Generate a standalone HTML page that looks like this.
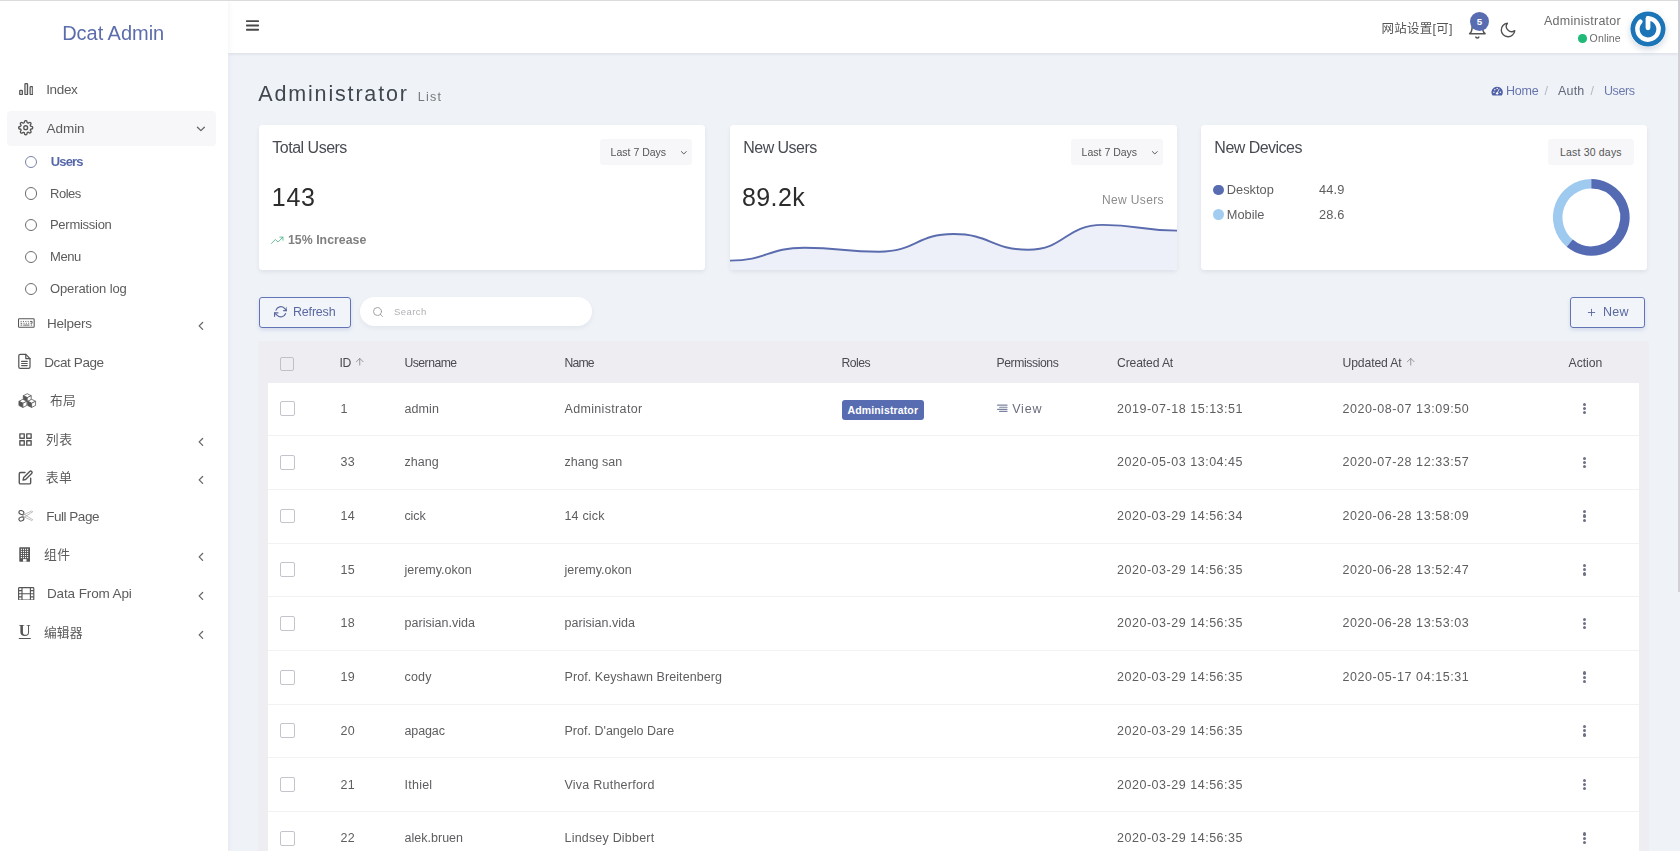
<!DOCTYPE html>
<html lang="en">
<head>
<meta charset="utf-8">
<title>Dcat Admin</title>
<style>
*{box-sizing:border-box;margin:0;padding:0}
html,body{width:1680px;height:851px;overflow:hidden}
body{will-change:opacity;background:#eff3f8;font-family:"Liberation Sans","Noto Sans CJK SC",sans-serif;color:#626262;position:relative;font-size:13px}
a{color:inherit;text-decoration:none}
ul{list-style:none}
svg{display:block;flex:none}
.topline{position:absolute;left:0;top:0;width:1680px;height:1px;background:#dbdbdc;z-index:50}
.scroll-thumb{position:absolute;left:1678px;top:0;width:2px;height:591.5px;background:#d0d0d6;z-index:60}
/* sidebar */
.sidebar{position:absolute;left:0;top:1px;width:228px;height:850px;background:#fff;box-shadow:1px 0 5px rgba(30,40,80,.05);z-index:10}
.brand{position:absolute;left:0;top:0;width:228px;height:64px;line-height:64px;text-align:center;color:#5c6dac;font-size:20px}
.mi{position:absolute;left:6.5px;width:209px;height:35px;border-radius:4px;color:#5c5c5c;font-size:13.5px;line-height:35px;white-space:nowrap;display:block}
.mi.open{background:#f7f7f9}
.mi .ico{position:absolute;top:0;height:35px;display:flex;align-items:center;color:#555}
.mi .txt{position:absolute;top:0}
.mi .arr{position:absolute;color:#686868}
.si{position:absolute;left:6.5px;width:209px;height:30px;line-height:30px;color:#5c5c5c;font-size:13px;white-space:nowrap;display:block}
.si .dot{position:absolute;left:18.6px;top:8.8px;width:12.4px;height:12.4px;border:1.3px solid #6c6c6c;border-radius:50%}
.si .txt{position:absolute;left:44px;top:0}
.si.active .txt{color:#5667a8;font-weight:bold}
.si.active .dot{border-color:#7a84a6}
/* header */
.navbar{position:absolute;left:228px;top:1px;width:1450px;height:52.2px;background:#fff;box-shadow:0 1px 3px rgba(60,60,85,.12);z-index:5}
.navbar .burger{position:absolute;left:18.3px;top:19px;color:#4a4a4a}
.navbar .site{position:absolute;left:1153.5px;top:15.5px;height:25px;line-height:25px;font-size:12.5px;color:#555;white-space:nowrap}
.navbar .bell{position:absolute;left:1238.9px;top:18.2px;color:#555}
.navbar .badge5{position:absolute;left:1242px;top:11px;width:19px;height:19px;border-radius:50%;background:#586cb1;color:#fff;font-size:9.8px;font-weight:bold;line-height:19.6px;text-align:center}
.navbar .moon{position:absolute;left:1271px;top:19.8px;color:#505050}
.navbar .uname{position:absolute;top:12.3px;font-size:12.5px;line-height:16px;color:#6b6b6b;white-space:nowrap}
.navbar .ustat{position:absolute;top:29.5px;font-size:10.5px;line-height:15px;color:#6b6b6b;white-space:nowrap}
.navbar .ustat i{position:absolute;left:-11.6px;top:3.7px;width:8.6px;height:8.6px;border-radius:50%;background:#21b978}
.navbar .avatar{position:absolute;left:1402px;top:9.8px;width:36px;height:36px;border-radius:50%;box-shadow:0 3px 6px rgba(30,60,110,.18)}
/* content header */
.page-title{position:absolute;font-weight:normal;top:76px;height:36px;line-height:36px;font-size:21.5px;color:#414750;white-space:nowrap}
.page-title small{font-size:12.5px;color:#777}
.breadcrumb{display:block}
/* cards */
.card{position:absolute;top:125px;height:145px;background:#fff;border-radius:3.5px;box-shadow:0 2px 4px rgba(20,20,40,.075);overflow:hidden}
.card .dd{position:absolute;top:14px;height:26px;background:#f7f7f9;border-radius:3px;font-size:10.5px;line-height:26px;color:#555;white-space:nowrap}
/* toolbar */
.btn{position:absolute;top:296.5px;height:31px;border:1px solid #6374b4;border-radius:3px;background:#f1f4f9;color:#5a699f;font-size:12.5px;line-height:29px;white-space:nowrap;box-shadow:0 2px 4px rgba(88,108,177,.18)}
.search{position:absolute;left:360px;top:297px;width:231.5px;height:29px;border-radius:15px;background:#fff;box-shadow:0 2px 5px rgba(40,50,90,.07)}
.search svg{position:absolute;left:11.5px;top:8.5px;color:#9a9a9a}
/* table */
.tw{position:absolute;left:257.5px;top:340.5px;width:1391px;height:520px;background:#ededf2;border-radius:3px 3px 0 0}
table{position:absolute;left:10px;top:0;width:1371px;border-collapse:separate;border-spacing:0;table-layout:fixed}
th{height:42px;padding:2.5px 0 0 0;text-align:left;font-weight:normal;font-size:12.2px;color:#4a4a52;white-space:nowrap;vertical-align:middle}
td{height:53.7px;padding:0 0 0.3px 0;background:#fff;border-bottom:1px solid #f2f2f5;font-size:12.5px;color:#5e5e62;white-space:nowrap;vertical-align:middle}
.cb{display:block;width:14.8px;height:14.8px;border:1.6px solid #c3c4cc;border-radius:2px;background:#fff}
th .cb{background:#ededf2;border-color:#bfc0c9;position:relative;top:1.2px}
.role{display:inline-block;position:relative;top:1.3px;background:#586cb1;color:#fff;font-size:10.5px;font-weight:bold;line-height:20px;height:20px;padding:0 6px;border-radius:3px;letter-spacing:0}
.dots{display:block;width:4px}
.dots i{display:block;width:3.2px;height:3.2px;border-radius:50%;background:#6e7088;margin:0 0 1px 0}
.dots i:last-child{margin:0}
</style>
</head>
<body>
<div class="topline"></div>
<div class="scroll-thumb"></div>
<aside class="sidebar">
<div class="brand" style="text-align:left;padding-left:62.20px"><span style="letter-spacing:-0.03px;">Dcat Admin</span></div>
<a class="mi " style="top:71.00px"><span class="ico" style="left:12.20px;top:-0.4px"><svg width="14.4" height="12.4" viewBox="0 0 14.4 12.4" fill="#d9d9d9" stroke="currentColor" stroke-width="1.15"><rect x="0.7" y="7.4" width="2.7" height="4.3" rx=".7"/><rect x="5.9" y="0.6" width="2.7" height="11.1" rx=".7"/><rect x="11.1" y="3.7" width="2.7" height="8" rx=".7"/></svg></span><span class="txt" style="left:39.66px;font-size:13.5px"><span style="letter-spacing:-0.338px;">Index</span></span></a>
<a class="mi open" style="top:109.70px"><span class="ico" style="left:11.70px;top:0px"><svg width="15.4" height="15.4" viewBox="0 0 24 24" fill="none" stroke="currentColor" stroke-width="2.1" stroke-linecap="round" stroke-linejoin="round" style=""><circle cx="12" cy="12" r="3"/><path d="M19.4 15a1.65 1.65 0 0 0 .33 1.82l.06.06a2 2 0 0 1 0 2.83 2 2 0 0 1-2.83 0l-.06-.06a1.65 1.65 0 0 0-1.82-.33 1.65 1.65 0 0 0-1 1.51V21a2 2 0 0 1-2 2 2 2 0 0 1-2-2v-.09A1.65 1.65 0 0 0 9 19.4a1.65 1.65 0 0 0-1.82.33l-.06.06a2 2 0 0 1-2.83 0 2 2 0 0 1 0-2.83l.06-.06a1.65 1.65 0 0 0 .33-1.82 1.65 1.65 0 0 0-1.51-1H3a2 2 0 0 1-2-2 2 2 0 0 1 2-2h.09A1.65 1.65 0 0 0 4.6 9a1.65 1.65 0 0 0-.33-1.82l-.06-.06a2 2 0 0 1 0-2.83 2 2 0 0 1 2.83 0l.06.06a1.65 1.65 0 0 0 1.82.33H9a1.65 1.65 0 0 0 1-1.51V3a2 2 0 0 1 2-2 2 2 0 0 1 2 2v.09a1.65 1.65 0 0 0 1 1.51 1.65 1.65 0 0 0 1.82-.33l.06-.06a2 2 0 0 1 2.83 0 2 2 0 0 1 0 2.83l-.06.06a1.65 1.65 0 0 0-.33 1.82V9a1.65 1.65 0 0 0 1.51 1H21a2 2 0 0 1 2 2 2 2 0 0 1-2 2h-.09a1.65 1.65 0 0 0-1.51 1z"/></svg></span><span class="txt" style="left:39.96px;font-size:13.5px"><span style="letter-spacing:-0.023px;">Admin</span></span><span class="arr" style="left:187.60px;top:11.20px"><svg width="13.8" height="13.8" viewBox="0 0 24 24" fill="none" stroke="currentColor" stroke-width="2.3" stroke-linecap="round" stroke-linejoin="round" style=""><polyline points="6 9 12 15 18 9"/></svg></span></a>
<a class="si active" style="top:145.75px"><span class="dot"></span><span class="txt" style="left:44.28px"><span style="letter-spacing:-0.872px;">Users</span></span></a>
<a class="si" style="top:177.50px"><span class="dot"></span><span class="txt" style="left:43.48px"><span style="letter-spacing:-0.472px;">Roles</span></span></a>
<a class="si" style="top:209.25px"><span class="dot"></span><span class="txt" style="left:43.48px"><span style="letter-spacing:-0.272px;">Permission</span></span></a>
<a class="si" style="top:241.00px"><span class="dot"></span><span class="txt" style="left:43.48px"><span style="letter-spacing:-0.39px;">Menu</span></span></a>
<a class="si" style="top:272.75px"><span class="dot"></span><span class="txt" style="left:43.48px"><span style="letter-spacing:-0.1px;">Operation log</span></span></a>
<a class="mi " style="top:305.00px"><span class="ico" style="left:11.50px;top:-0.6px"><svg width="16.7" height="10" viewBox="0 0 32 18" fill="none" stroke="currentColor" stroke-width="2"><rect x="1" y="1" width="30" height="16" rx="1.5"/><path d="M5 6h2M9.5 6h2M14 6h2M18.5 6h2M23 6h4M5 9.5h3M10.5 9.5h2M15 9.5h2M19.5 9.5h2M24 9.5h3M27 6v3.5M5 13h3M10 13h12M24.5 13h2.5" stroke-width="1.8"/></svg></span><span class="txt" style="left:40.56px;font-size:13.5px"><span style="letter-spacing:-0.241px;">Helpers</span></span><span class="arr" style="left:187.50px;top:13.00px"><svg width="13.8" height="13.8" viewBox="0 0 24 24" fill="none" stroke="currentColor" stroke-width="2.3" stroke-linecap="round" stroke-linejoin="round" style=""><polyline points="15 18 9 12 15 6"/></svg></span></a>
<a class="mi " style="top:343.50px"><span class="ico" style="left:9.80px;top:-0.5px"><svg width="16.8" height="16.8" viewBox="0 0 24 24" fill="none" stroke="currentColor" stroke-width="1.75" stroke-linecap="round" stroke-linejoin="round" style=""><path d="M14 2H6a2 2 0 0 0-2 2v16a2 2 0 0 0 2 2h12a2 2 0 0 0 2-2V8z"/><polyline points="14 2 14 8 20 8"/><line x1="16" y1="12" x2="8" y2="12"/><line x1="16" y1="15" x2="8" y2="15"/><line x1="16" y1="18" x2="8" y2="18"/></svg></span><span class="txt" style="left:37.76px;font-size:13.5px"><span style="letter-spacing:-0.395px;">Dcat Page</span></span></a>
<a class="mi " style="top:382.00px"><span class="ico" style="left:11.80px;top:0px"><svg width="18.5" height="15" viewBox="0 0 38 31"><path d="M19 1.5 l8.2 4.1 l-8.2 4.1 l-8.2 -4.1 z" fill="#fff" stroke="currentColor" stroke-width="1.6" stroke-linejoin="round"/><path d="M10.8 5.6 l8.2 4.1 v8.61 l-8.2 -4.1 z" fill="currentColor" stroke="currentColor" stroke-width="1.6" stroke-linejoin="round"/><path d="M27.2 5.6 l-8.2 4.1 v8.61 l8.2 -4.1 z" fill="#fff" stroke="currentColor" stroke-width="1.6" stroke-linejoin="round"/><path d="M10 13 l8.2 4.1 l-8.2 4.1 l-8.2 -4.1 z" fill="#fff" stroke="currentColor" stroke-width="1.6" stroke-linejoin="round"/><path d="M1.8000000000000007 17.1 l8.2 4.1 v8.61 l-8.2 -4.1 z" fill="currentColor" stroke="currentColor" stroke-width="1.6" stroke-linejoin="round"/><path d="M18.2 17.1 l-8.2 4.1 v8.61 l8.2 -4.1 z" fill="#fff" stroke="currentColor" stroke-width="1.6" stroke-linejoin="round"/><path d="M28 13 l8.2 4.1 l-8.2 4.1 l-8.2 -4.1 z" fill="#fff" stroke="currentColor" stroke-width="1.6" stroke-linejoin="round"/><path d="M19.8 17.1 l8.2 4.1 v8.61 l-8.2 -4.1 z" fill="currentColor" stroke="currentColor" stroke-width="1.6" stroke-linejoin="round"/><path d="M36.2 17.1 l-8.2 4.1 v8.61 l8.2 -4.1 z" fill="#fff" stroke="currentColor" stroke-width="1.6" stroke-linejoin="round"/></svg></span><span class="txt" style="left:43.39px;font-size:12.8px"><span style="letter-spacing:0.44px;">布局</span></span></a>
<a class="mi " style="top:420.50px"><span class="ico" style="left:11.60px;top:0px"><svg width="15" height="15" viewBox="0 0 24 24" fill="none" stroke="currentColor" stroke-width="2.2" stroke-linecap="round" stroke-linejoin="round" style=""><rect x="3" y="3" width="7" height="7"/><rect x="14" y="3" width="7" height="7"/><rect x="14" y="14" width="7" height="7"/><rect x="3" y="14" width="7" height="7"/></svg></span><span class="txt" style="left:39.19px;font-size:12.8px"><span style="letter-spacing:0.84px;">列表</span></span><span class="arr" style="left:187.50px;top:13.00px"><svg width="13.8" height="13.8" viewBox="0 0 24 24" fill="none" stroke="currentColor" stroke-width="2.3" stroke-linecap="round" stroke-linejoin="round" style=""><polyline points="15 18 9 12 15 6"/></svg></span></a>
<a class="mi " style="top:459.00px"><span class="ico" style="left:11.70px;top:0px"><svg width="15.2" height="15.2" viewBox="0 0 24 24" fill="none" stroke="currentColor" stroke-width="2.2" stroke-linecap="round" stroke-linejoin="round" style=""><path d="M11 4H4a2 2 0 0 0-2 2v14a2 2 0 0 0 2 2h14a2 2 0 0 0 2-2v-7"/><path d="M18.5 2.5a2.121 2.121 0 0 1 3 3L12 15l-4 1 1-4 9.5-9.5z"/></svg></span><span class="txt" style="left:39.19px;font-size:12.8px"><span style="letter-spacing:0.44px;">表单</span></span><span class="arr" style="left:187.50px;top:13.00px"><svg width="13.8" height="13.8" viewBox="0 0 24 24" fill="none" stroke="currentColor" stroke-width="2.3" stroke-linecap="round" stroke-linejoin="round" style=""><polyline points="15 18 9 12 15 6"/></svg></span></a>
<a class="mi " style="top:497.50px"><span class="ico" style="left:11.70px;top:0px"><svg width="15.5" height="11.5" viewBox="0 0 30 23" fill="none" stroke="currentColor" stroke-width="2.3" stroke-linecap="round"><ellipse cx="6.3" cy="5" rx="5" ry="3.9" transform="rotate(20 6.3 5)"/><ellipse cx="6.3" cy="18" rx="5" ry="3.9" transform="rotate(-20 6.3 18)"/><path d="M10.5 7.5 L29 19.5 L27 21 L10 13 Z M10.5 15.5 L29 3.5 L27 2 L10 10 Z" stroke-width="1.1" stroke="#8a8a8a" stroke-linejoin="round"/></svg></span><span class="txt" style="left:39.66px;font-size:13.5px"><span style="letter-spacing:-0.47px;">Full Page</span></span></a>
<a class="mi " style="top:536.00px"><span class="ico" style="left:12.00px;top:0px"><svg width="11.5" height="15" viewBox="0 0 20 26"><rect x="0.5" y="0.5" width="19" height="25" rx="1" fill="currentColor"/><rect x="3.2" y="3.0" width="2" height="2" fill="#fff"/><rect x="6.800000000000001" y="3.0" width="2" height="2" fill="#fff"/><rect x="10.4" y="3.0" width="2" height="2" fill="#fff"/><rect x="14.0" y="3.0" width="2" height="2" fill="#fff"/><rect x="3.2" y="6.6" width="2" height="2" fill="#fff"/><rect x="6.800000000000001" y="6.6" width="2" height="2" fill="#fff"/><rect x="10.4" y="6.6" width="2" height="2" fill="#fff"/><rect x="14.0" y="6.6" width="2" height="2" fill="#fff"/><rect x="3.2" y="10.2" width="2" height="2" fill="#fff"/><rect x="6.800000000000001" y="10.2" width="2" height="2" fill="#fff"/><rect x="10.4" y="10.2" width="2" height="2" fill="#fff"/><rect x="14.0" y="10.2" width="2" height="2" fill="#fff"/><rect x="3.2" y="13.8" width="2" height="2" fill="#fff"/><rect x="6.800000000000001" y="13.8" width="2" height="2" fill="#fff"/><rect x="10.4" y="13.8" width="2" height="2" fill="#fff"/><rect x="14.0" y="13.8" width="2" height="2" fill="#fff"/><rect x="3.2" y="17.4" width="2" height="2" fill="#fff"/><rect x="6.800000000000001" y="17.4" width="2" height="2" fill="#fff"/><rect x="10.4" y="17.4" width="2" height="2" fill="#fff"/><rect x="14.0" y="17.4" width="2" height="2" fill="#fff"/><rect x="7" y="21" width="6" height="4.5" fill="#fff"/></svg></span><span class="txt" style="left:37.49px;font-size:12.8px"><span style="letter-spacing:0.44px;">组件</span></span><span class="arr" style="left:187.50px;top:13.00px"><svg width="13.8" height="13.8" viewBox="0 0 24 24" fill="none" stroke="currentColor" stroke-width="2.3" stroke-linecap="round" stroke-linejoin="round" style=""><polyline points="15 18 9 12 15 6"/></svg></span></a>
<a class="mi " style="top:575.00px"><span class="ico" style="left:11.70px;top:0px"><svg width="16.4" height="13.6" viewBox="0 0 16.4 13.6" fill="none" stroke="currentColor" stroke-width="1.15"><rect x=".6" y=".6" width="15.2" height="12.4" rx=".9"/><path d="M4 .6V13M12.4 .6V13M4 6.8H12.4M.6 3.7H4M.6 6.8H4M.6 9.9H4M12.4 3.7H15.8M12.4 6.8H15.8M12.4 9.9H15.8"/></svg></span><span class="txt" style="left:40.46px;font-size:13.5px"><span style="letter-spacing:-0.117px;">Data From Api</span></span><span class="arr" style="left:187.50px;top:13.00px"><svg width="13.8" height="13.8" viewBox="0 0 24 24" fill="none" stroke="currentColor" stroke-width="2.3" stroke-linecap="round" stroke-linejoin="round" style=""><polyline points="15 18 9 12 15 6"/></svg></span></a>
<a class="mi " style="top:613.50px"><span class="ico" style="left:12.30px;top:-1.2px"><span style="font-family:'Liberation Serif',serif;font-weight:bold;font-size:16.5px;text-decoration:underline;text-underline-offset:1.5px;line-height:35px;color:#555">U</span></span><span class="txt" style="left:37.49px;font-size:12.8px"><span style="letter-spacing:0.07px;">编辑器</span></span><span class="arr" style="left:187.50px;top:13.00px"><svg width="13.8" height="13.8" viewBox="0 0 24 24" fill="none" stroke="currentColor" stroke-width="2.3" stroke-linecap="round" stroke-linejoin="round" style=""><polyline points="15 18 9 12 15 6"/></svg></span></a>
</aside>
<header class="navbar">
<span class="burger"><svg width="13" height="11" viewBox="0 0 13 11"><rect x="0" y="0.2" width="13" height="1.9" rx=".6" fill="currentColor"/><rect x="0" y="4.5" width="13" height="1.9" rx=".6" fill="currentColor"/><rect x="0" y="8.8" width="13" height="1.9" rx=".6" fill="currentColor"/></svg></span>
<a class="site"><span style="letter-spacing:0.244px;">网站设置[可]</span></a>
<span class="bell"><svg width="20.7" height="20.7" viewBox="0 0 24 24" fill="none" stroke="currentColor" stroke-width="1.75" stroke-linecap="round" stroke-linejoin="round" style=""><path d="M18 8A6 6 0 0 0 6 8c0 7-3 9-3 9h18s-3-2-3-9"/><path d="M13.73 21a2 2 0 0 1-3.46 0"/></svg></span><span class="badge5">5</span>
<span class="moon"><svg width="18" height="18" viewBox="0 0 24 24" fill="none" stroke="currentColor" stroke-width="1.8" stroke-linecap="round" stroke-linejoin="round" style=""><path d="M21 12.79A9 9 0 1 1 11.21 3 7 7 0 0 0 21 12.79z"/></svg></span>
<div class="uname" style="left:1315.90px"><span style="letter-spacing:0.266px;">Administrator</span></div><div class="ustat" style="left:1361.58px"><i></i><span style="letter-spacing:0.155px;">Online</span></div>
<svg class="avatar" viewBox="-18 -18 36 36"><circle r="17.6" fill="#1b75b6"/><path d="M0 -10.6 A10.6 10.6 0 1 1 -7.6 -7.4" fill="none" stroke="#fff" stroke-width="4.5" stroke-linecap="round"/><path d="M0 -10.6 V-1.2" stroke="#fff" stroke-width="4.8" stroke-linecap="round"/></svg>
</header>
<main>
<h1 class="page-title" style="left:258.34px"><span style="letter-spacing:1.827px;">Administrator</span><small style="position:absolute;left:159.46px;top:2.8px"><span style="letter-spacing:1.224px;">List</span></small></h1>
<nav class="breadcrumb"><span style="position:absolute;left:1491px;top:86.3px;color:#4f60a6"><svg width="12.3" height="10.4" viewBox="0 0 28 24"><path d="M14 1.5a13 13 0 0 0-11 20 1.5 1.5 0 0 0 1.3.7h19.4a1.5 1.5 0 0 0 1.3-.7A13 13 0 0 0 14 1.5z" fill="currentColor"/><circle cx="6.5" cy="14.5" r="1.7" fill="#fff"/><circle cx="8.7" cy="8.5" r="1.7" fill="#fff"/><circle cx="14" cy="6" r="1.7" fill="#fff"/><circle cx="21.5" cy="14.5" r="1.7" fill="#fff"/><path d="M18.5 7.5 L14.8 15" stroke="#fff" stroke-width="1.8" stroke-linecap="round"/><circle cx="14" cy="17" r="2.8" fill="#fff"/></svg></span>
<div style="position:absolute;left:1506.00px;top:81.80px;line-height:18px;font-size:12.5px;white-space:nowrap;color:#6574ad;"><span style="letter-spacing:-0.24px;">Home</span></div>
<div style="position:absolute;left:1544.40px;top:81.80px;line-height:18px;font-size:12.5px;white-space:nowrap;color:#b4b8c4;"><span style="letter-spacing:0.652px;">/</span></div>
<div style="position:absolute;left:1558.00px;top:81.80px;line-height:18px;font-size:12.5px;white-space:nowrap;color:#62687a;"><span style="letter-spacing:0.17px;">Auth</span></div>
<div style="position:absolute;left:1590.50px;top:81.80px;line-height:18px;font-size:12.5px;white-space:nowrap;color:#b4b8c4;"><span style="letter-spacing:0.552px;">/</span></div>
<div style="position:absolute;left:1603.90px;top:81.80px;line-height:18px;font-size:12.5px;white-space:nowrap;color:#6c79ab;"><span style="letter-spacing:-0.354px;">Users</span></div>
</nav>
<section class="card" style="left:258.5px;width:446.5px">
<div style="position:absolute;left:13.86px;top:11.50px;line-height:22px;font-size:16px;white-space:nowrap;color:#484b52;"><span style="letter-spacing:-0.502px;">Total Users</span></div>
<div class="dd" style="left:341.5px;width:91.5px"><div style="position:absolute;left:10.58px;top:5.80px;line-height:15px;font-size:10.5px;white-space:nowrap;"><span style="letter-spacing:0.008px;">Last 7 Days</span></div><span style="position:absolute;left:78.6px;top:9px;color:#555"><svg width="9.6" height="9.6" viewBox="0 0 24 24" fill="none" stroke="currentColor" stroke-width="2.5" stroke-linecap="round" stroke-linejoin="round" style=""><polyline points="6 9 12 15 18 9"/></svg></span></div>
<div style="position:absolute;left:13.30px;top:54.70px;line-height:35px;font-size:25px;white-space:nowrap;color:#2c2c2c;"><span style="letter-spacing:0.719px;">143</span></div>
<div style="position:absolute;left:12.5px;top:108.5px;color:#56b78b"><svg width="12.5" height="12.5" viewBox="0 0 24 24" fill="none" stroke="currentColor" stroke-width="1.7" stroke-linecap="round" stroke-linejoin="round" style=""><polyline points="23 6 13.5 15.5 8.5 10.5 1 18"/><polyline points="17 6 23 6 23 12"/></svg></div>
<div style="position:absolute;left:29.51px;top:106.70px;line-height:17px;font-size:12.3px;white-space:nowrap;font-weight:bold;color:#7f7f7f;"><span style="letter-spacing:0.033px;">15% Increase</span></div>
</section>
<section class="card" style="left:729.5px;width:447.5px">
<div style="position:absolute;left:13.86px;top:11.50px;line-height:22px;font-size:16px;white-space:nowrap;color:#484b52;"><span style="letter-spacing:-0.554px;">New Users</span></div>
<div class="dd" style="left:341.5px;width:91.5px"><div style="position:absolute;left:10.58px;top:5.80px;line-height:15px;font-size:10.5px;white-space:nowrap;"><span style="letter-spacing:0.008px;">Last 7 Days</span></div><span style="position:absolute;left:78.6px;top:9px;color:#555"><svg width="9.6" height="9.6" viewBox="0 0 24 24" fill="none" stroke="currentColor" stroke-width="2.5" stroke-linecap="round" stroke-linejoin="round" style=""><polyline points="6 9 12 15 18 9"/></svg></span></div>
<div style="position:absolute;left:12.40px;top:55.00px;line-height:35px;font-size:25px;white-space:nowrap;color:#2c2c2c;"><span style="letter-spacing:0.448px;">89.2k</span></div>
<div style="position:absolute;left:372.52px;top:66.50px;line-height:17px;font-size:12px;white-space:nowrap;color:#8c8c8c;"><span style="letter-spacing:0.365px;">New Users</span></div>
<svg style="position:absolute;left:0;top:0" width="448" height="145" viewBox="0 0 448 145"><path d="M0.0 135.6 C37.2 135.6 37.2 122.7 74.5 122.7 C111.8 122.7 111.8 126.7 149.0 126.7 C186.2 126.7 186.2 109.0 223.5 109.0 C260.8 109.0 260.8 124.7 298.0 124.7 C335.2 124.7 335.2 99.9 372.5 99.9 C409.8 99.9 409.8 105.6 447.0 105.6 L447.0 146 L0 146 Z" fill="#edf0f8" stroke="none"/><path d="M0.0 135.6 C37.2 135.6 37.2 122.7 74.5 122.7 C111.8 122.7 111.8 126.7 149.0 126.7 C186.2 126.7 186.2 109.0 223.5 109.0 C260.8 109.0 260.8 124.7 298.0 124.7 C335.2 124.7 335.2 99.9 372.5 99.9 C409.8 99.9 409.8 105.6 447.0 105.6" fill="none" stroke="#5a6cae" stroke-width="1.9"/></svg>
</section>
<section class="card" style="left:1201px;width:446px">
<div style="position:absolute;left:13.36px;top:11.50px;line-height:22px;font-size:16px;white-space:nowrap;color:#484b52;"><span style="letter-spacing:-0.526px;">New Devices</span></div>
<div class="dd" style="left:347px;width:85.5px"><div style="position:absolute;left:11.88px;top:5.80px;line-height:15px;font-size:10.5px;white-space:nowrap;"><span style="letter-spacing:0.199px;">Last 30 days</span></div></div>
<div style="position:absolute;left:12.2px;top:59.6px;width:10.8px;height:10.8px;border-radius:50%;background:#586cb1"></div>
<div style="position:absolute;left:25.79px;top:56.20px;line-height:18px;font-size:12.8px;white-space:nowrap;color:#5e5e62;"><span style="letter-spacing:0.014px;">Desktop</span></div>
<div style="position:absolute;left:117.89px;top:56.20px;line-height:18px;font-size:12.8px;white-space:nowrap;color:#5e5e62;"><span style="letter-spacing:0.209px;">44.9</span></div>
<div style="position:absolute;left:12.2px;top:84.4px;width:10.8px;height:10.8px;border-radius:50%;background:#a3cdf0"></div>
<div style="position:absolute;left:25.79px;top:81.00px;line-height:18px;font-size:12.8px;white-space:nowrap;color:#5e5e62;"><span style="letter-spacing:-0.013px;">Mobile</span></div>
<div style="position:absolute;left:117.89px;top:81.00px;line-height:18px;font-size:12.8px;white-space:nowrap;color:#5e5e62;"><span style="letter-spacing:0.209px;">28.6</span></div>
<svg style="position:absolute;left:340px;top:48px" width="100" height="90" viewBox="0 0 100 90"><path d="M28.74 70.17 A33.6 33.6 0 0 1 50.3 10.799999999999997" fill="none" stroke="#9ecaef" stroke-width="9.5"/><path d="M50.3 10.799999999999997 A33.6 33.6 0 1 1 28.74 70.17" fill="none" stroke="#546ab3" stroke-width="9.5"/></svg>
</section>

<a class="btn" style="left:258.5px;width:92px"><span style="position:absolute;left:14px;top:7.7px"><svg width="13.6" height="13.6" viewBox="0 0 24 24" fill="none" stroke="currentColor" stroke-width="2.1" stroke-linecap="round" stroke-linejoin="round" style=""><polyline points="23 4 23 10 17 10"/><polyline points="1 20 1 14 7 14"/><path d="M3.51 9a9 9 0 0 1 14.85-3.36L23 10M1 14l4.64 4.36A9 9 0 0 0 20.49 15"/></svg></span><div style="position:absolute;left:33.50px;top:5.10px;line-height:18px;font-size:12.5px;white-space:nowrap;"><span style="letter-spacing:-0.191px;">Refresh</span></div></a>
<div class="search"><svg width="12" height="12" viewBox="0 0 24 24" fill="none" stroke="currentColor" stroke-width="1.8" stroke-linecap="round" stroke-linejoin="round" style=""><circle cx="11" cy="11" r="8"/><line x1="21" y1="21" x2="16.65" y2="16.65"/></svg><div style="position:absolute;left:33.92px;top:7.80px;line-height:13px;font-size:9.5px;white-space:nowrap;color:#b0b0b6;"><span style="letter-spacing:0.475px;">Search</span></div></div>
<a class="btn" style="left:1569.5px;width:75.5px"><span style="position:absolute;left:15.5px;top:9px"><svg width="11" height="11" viewBox="0 0 24 24" fill="none" stroke="currentColor" stroke-width="2" stroke-linecap="round" stroke-linejoin="round" style=""><line x1="12" y1="5" x2="12" y2="19"/><line x1="5" y1="12" x2="19" y2="12"/></svg></span><div style="position:absolute;left:32.50px;top:5.10px;line-height:18px;font-size:12.5px;white-space:nowrap;"><span style="letter-spacing:0.309px;">New</span></div></a>
<div class="tw">
<table><colgroup><col style="width:72px"><col style="width:65px"><col style="width:160px"><col style="width:277px"><col style="width:155px"><col style="width:120.5px"><col style="width:225.5px"><col style="width:226px"><col></colgroup>
<thead><tr><th style="padding-left:12px"><span class="cb"></span></th><th><span style="letter-spacing:-0.39px;">ID</span><span style="display:inline-block;vertical-align:-1px;margin-left:3.2px;color:#8f8f98"><svg width="11.5" height="11.5" viewBox="0 0 24 24" fill="none" stroke="currentColor" stroke-width="1.9" stroke-linecap="round" stroke-linejoin="round" style=""><line x1="12" y1="19" x2="12" y2="5"/><polyline points="5 12 12 5 19 12"/></svg></span></th><th><span style="letter-spacing:-0.524px;">Username</span></th><th><span style="letter-spacing:-0.811px;">Name</span></th><th><span style="letter-spacing:-0.495px;">Roles</span></th><th><span style="letter-spacing:-0.403px;">Permissions</span></th><th><span style="letter-spacing:-0.149px;">Created At</span></th><th><span style="letter-spacing:-0.118px;">Updated At</span><span style="display:inline-block;vertical-align:-1px;margin-left:3.2px;color:#8f8f98"><svg width="11.5" height="11.5" viewBox="0 0 24 24" fill="none" stroke="currentColor" stroke-width="1.9" stroke-linecap="round" stroke-linejoin="round" style=""><line x1="12" y1="19" x2="12" y2="5"/><polyline points="5 12 12 5 19 12"/></svg></span></th><th><span style="letter-spacing:0.0px;">Action</span></th></tr></thead>
<tbody>
<tr><td style="padding-left:12.5px"><span class="cb"></span></td><td style="padding-left:1px"><span style="letter-spacing:-0.827px;">1</span></td><td><span style="letter-spacing:0.095px;">admin</span></td><td><span style="letter-spacing:0.333px;">Administrator</span></td><td><span class="role"><span style="letter-spacing:0.138px;">Administrator</span></span></td><td><a style="color:#696d7e;display:inline-flex;align-items:center;position:relative;top:1.4px"><svg width="12.6" height="12.6" viewBox="0 0 24 24" fill="none" stroke="currentColor" stroke-width="2.3" stroke-linecap="round" stroke-linejoin="round" style="margin:0 3.4px 0 -.3px;position:relative;top:-1px;color:#7c849f"><line x1="21" y1="10" x2="7" y2="10"/><line x1="21" y1="6" x2="3" y2="6"/><line x1="21" y1="14" x2="3" y2="14"/><line x1="21" y1="18" x2="7" y2="18"/></svg><span style="letter-spacing:0.819px;">View</span></a></td><td><span style="letter-spacing:0.525px;">2019-07-18 15:13:51</span></td><td><span style="letter-spacing:0.564px;">2020-08-07 13:09:50</span></td><td style="padding-left:14px"><span class="dots"><i></i><i></i><i></i></span></td></tr>
<tr><td style="padding-left:12.5px"><span class="cb"></span></td><td style="padding-left:1px"><span style="letter-spacing:0.221px;">33</span></td><td><span style="letter-spacing:0.042px;">zhang</span></td><td><span style="letter-spacing:-0.007px;">zhang san</span></td><td></td><td></td><td><span style="letter-spacing:0.525px;">2020-05-03 13:04:45</span></td><td><span style="letter-spacing:0.564px;">2020-07-28 12:33:57</span></td><td style="padding-left:14px"><span class="dots"><i></i><i></i><i></i></span></td></tr>
<tr><td style="padding-left:12.5px"><span class="cb"></span></td><td style="padding-left:1px"><span style="letter-spacing:0.221px;">14</span></td><td><span style="letter-spacing:-0.134px;">cick</span></td><td><span style="letter-spacing:0.17px;">14 cick</span></td><td></td><td></td><td><span style="letter-spacing:0.525px;">2020-03-29 14:56:34</span></td><td><span style="letter-spacing:0.564px;">2020-06-28 13:58:09</span></td><td style="padding-left:14px"><span class="dots"><i></i><i></i><i></i></span></td></tr>
<tr><td style="padding-left:12.5px"><span class="cb"></span></td><td style="padding-left:1px"><span style="letter-spacing:0.221px;">15</span></td><td><span style="letter-spacing:-0.003px;">jeremy.okon</span></td><td><span style="letter-spacing:-0.003px;">jeremy.okon</span></td><td></td><td></td><td><span style="letter-spacing:0.525px;">2020-03-29 14:56:35</span></td><td><span style="letter-spacing:0.564px;">2020-06-28 13:52:47</span></td><td style="padding-left:14px"><span class="dots"><i></i><i></i><i></i></span></td></tr>
<tr><td style="padding-left:12.5px"><span class="cb"></span></td><td style="padding-left:1px"><span style="letter-spacing:0.221px;">18</span></td><td><span style="letter-spacing:0.021px;">parisian.vida</span></td><td><span style="letter-spacing:0.021px;">parisian.vida</span></td><td></td><td></td><td><span style="letter-spacing:0.525px;">2020-03-29 14:56:35</span></td><td><span style="letter-spacing:0.564px;">2020-06-28 13:53:03</span></td><td style="padding-left:14px"><span class="dots"><i></i><i></i><i></i></span></td></tr>
<tr><td style="padding-left:12.5px"><span class="cb"></span></td><td style="padding-left:1px"><span style="letter-spacing:0.221px;">19</span></td><td><span style="letter-spacing:0.174px;">cody</span></td><td><span style="letter-spacing:0.071px;">Prof. Keyshawn Breitenberg</span></td><td></td><td></td><td><span style="letter-spacing:0.525px;">2020-03-29 14:56:35</span></td><td><span style="letter-spacing:0.564px;">2020-05-17 04:15:31</span></td><td style="padding-left:14px"><span class="dots"><i></i><i></i><i></i></span></td></tr>
<tr><td style="padding-left:12.5px"><span class="cb"></span></td><td style="padding-left:1px"><span style="letter-spacing:0.221px;">20</span></td><td><span style="letter-spacing:-0.117px;">apagac</span></td><td><span style="letter-spacing:0.013px;">Prof. D'angelo Dare</span></td><td></td><td></td><td><span style="letter-spacing:0.525px;">2020-03-29 14:56:35</span></td><td></td><td style="padding-left:14px"><span class="dots"><i></i><i></i><i></i></span></td></tr>
<tr><td style="padding-left:12.5px"><span class="cb"></span></td><td style="padding-left:1px"><span style="letter-spacing:0.221px;">21</span></td><td><span style="letter-spacing:0.244px;">Ithiel</span></td><td><span style="letter-spacing:0.236px;">Viva Rutherford</span></td><td></td><td></td><td><span style="letter-spacing:0.525px;">2020-03-29 14:56:35</span></td><td></td><td style="padding-left:14px"><span class="dots"><i></i><i></i><i></i></span></td></tr>
<tr><td style="padding-left:12.5px"><span class="cb"></span></td><td style="padding-left:1px"><span style="letter-spacing:0.221px;">22</span></td><td><span style="letter-spacing:0.017px;">alek.bruen</span></td><td><span style="letter-spacing:0.198px;">Lindsey Dibbert</span></td><td></td><td></td><td><span style="letter-spacing:0.525px;">2020-03-29 14:56:35</span></td><td></td><td style="padding-left:14px"><span class="dots"><i></i><i></i><i></i></span></td></tr>
</tbody></table>
</div>
</main>
</body>
</html>
